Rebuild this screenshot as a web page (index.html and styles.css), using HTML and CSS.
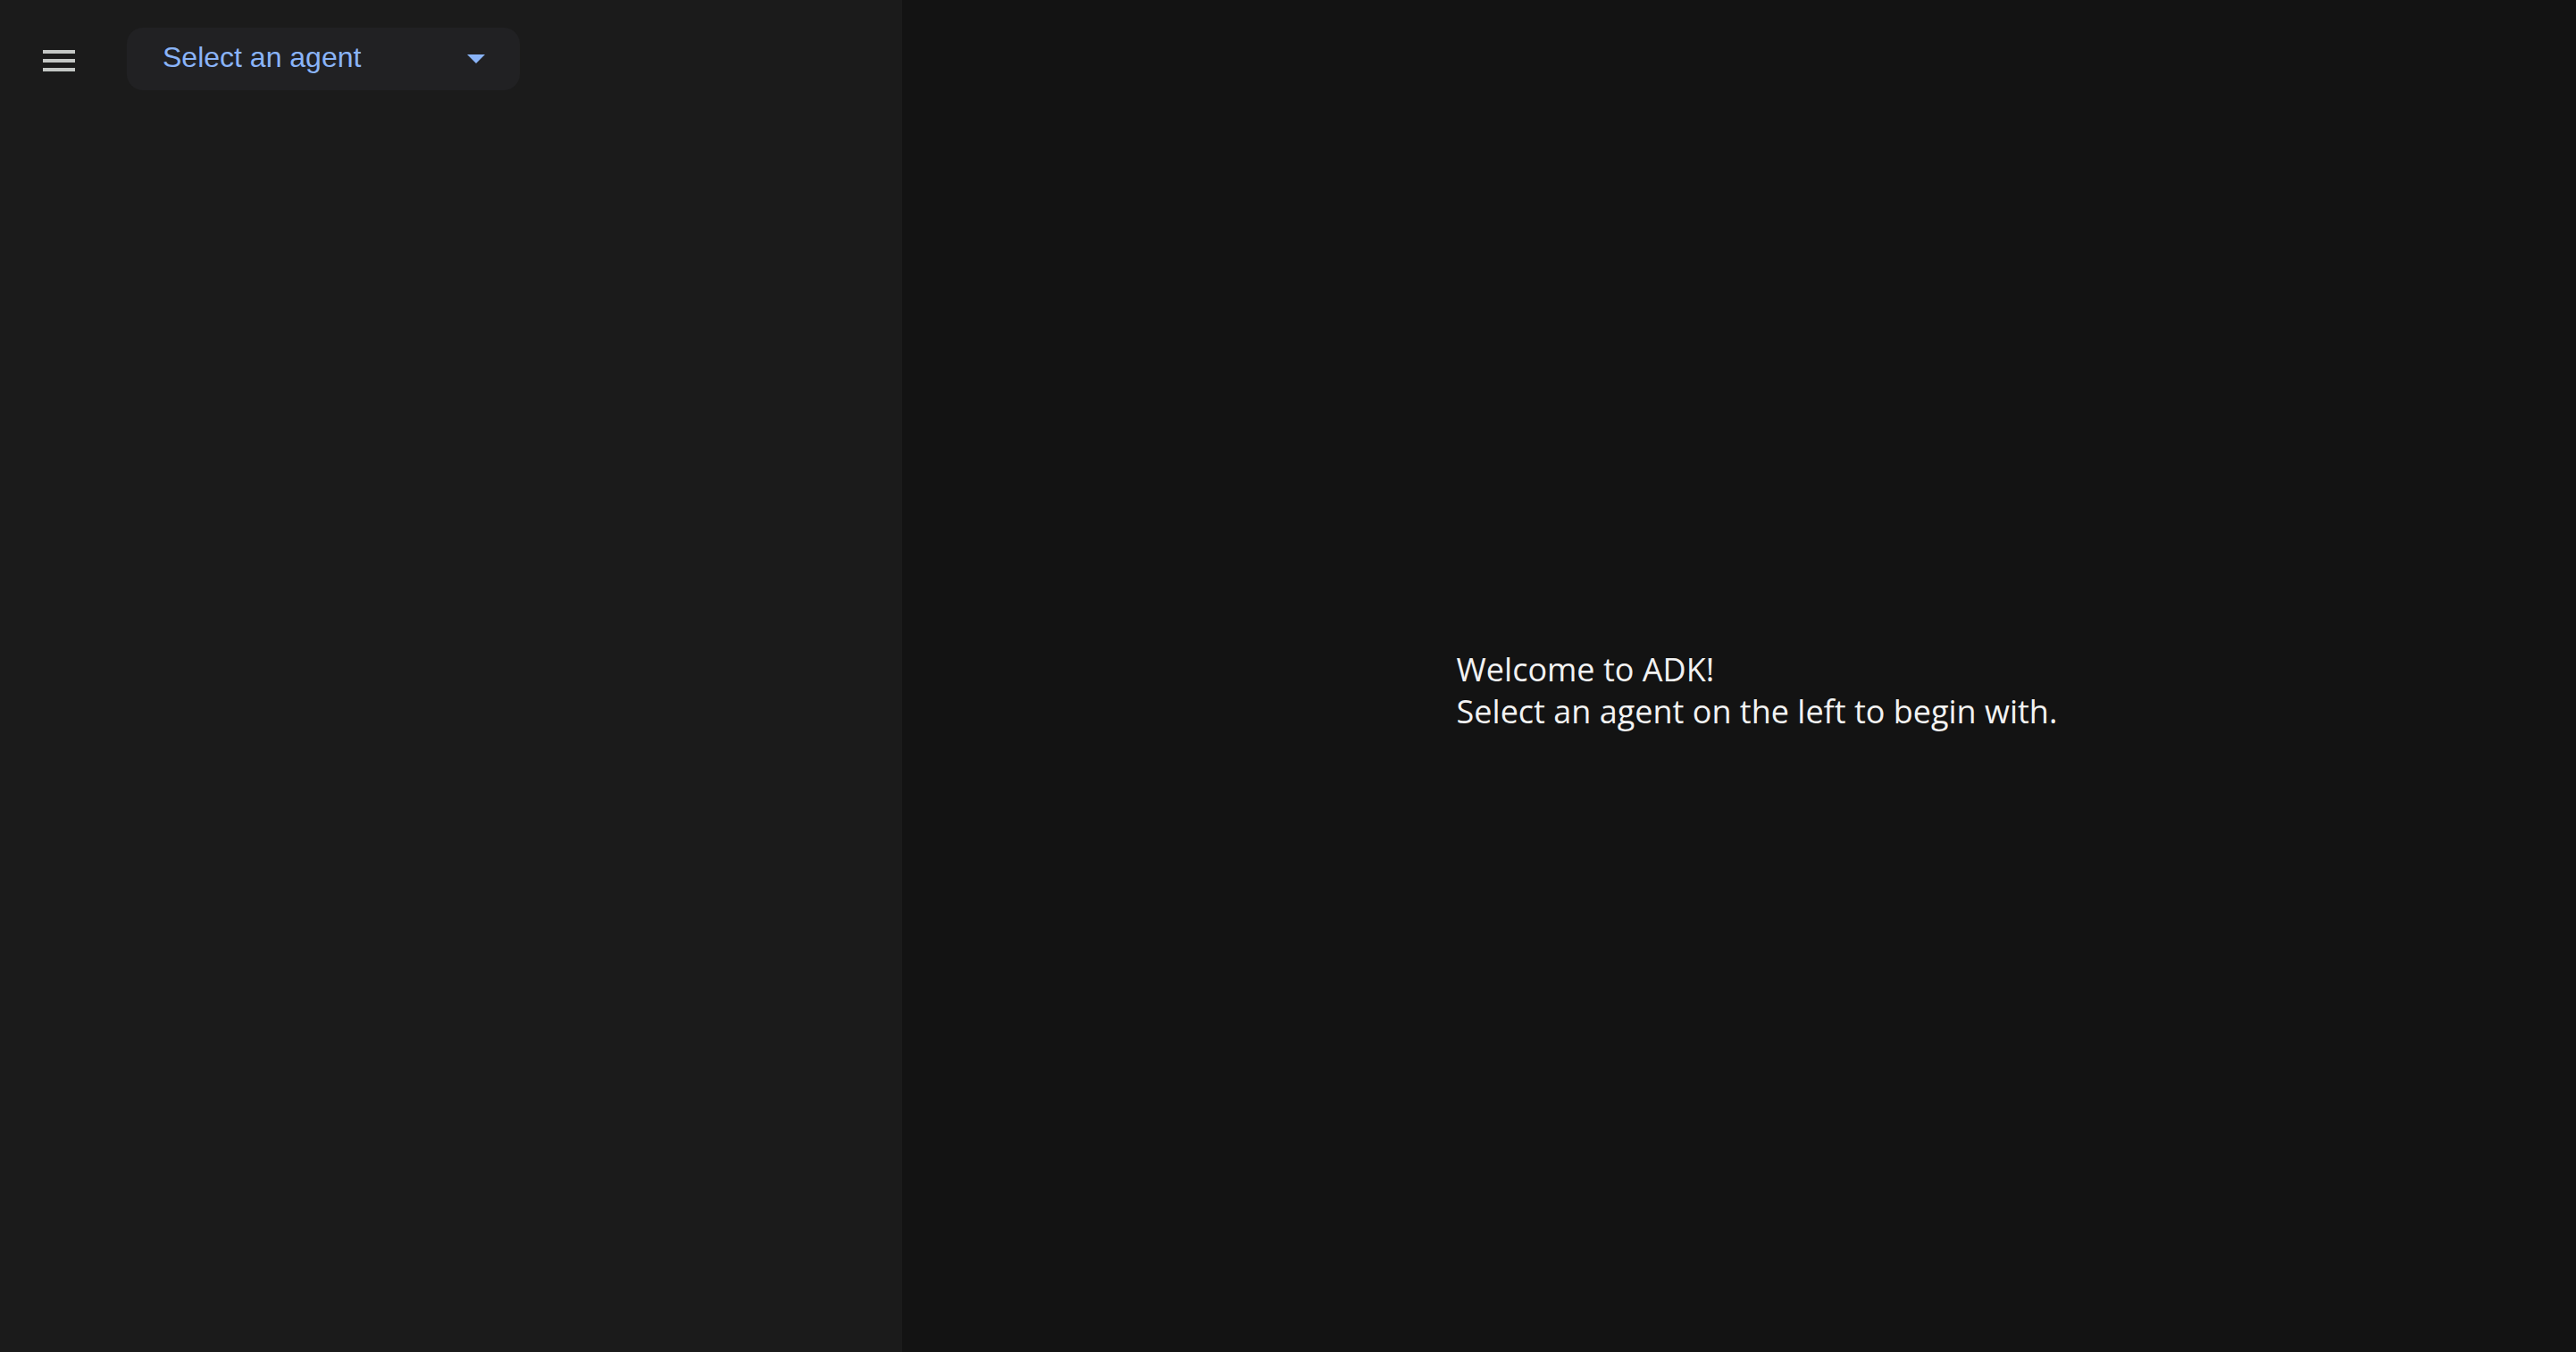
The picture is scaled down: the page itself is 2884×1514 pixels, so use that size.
FILE: index.html
```html
<!DOCTYPE html>
<html lang="en">
<head>
<meta charset="utf-8">
<title>ADK</title>
<link rel="stylesheet" href="styles.css">
</head>
<body>
<div class="app">
  <aside class="sidebar">
    <div class="toolbar">
      <button class="menu-btn" aria-label="Menu">
        <svg width="48" height="48" viewBox="0 0 24 24"><path d="M3 18h18v-2H3v2zm0-5h18v-2H3v2zm0-7v2h18V6H3z" fill="#c4c7c5"/></svg>
      </button>
      <div class="agent-select">
        <span class="agent-label">Select an agent</span>
        <svg class="arrow" width="20" height="10" viewBox="0 0 20 10"><path d="M0 0h20L10 10z" fill="#8ab4f8"/></svg>
      </div>
    </div>
  </aside>
  <main class="content">
    <div class="welcome">
      <div>Welcome to ADK!</div>
      <div>Select an agent on the left to begin with.</div>
    </div>
  </main>
</div>
</body>
</html>
```
FILE: styles.css
```css
html, body {
  margin: 0;
  padding: 0;
  height: 100%;
  background: #131313;
}
.app {
  display: flex;
  height: 100vh;
}
.sidebar {
  width: 1010px;
  flex: 0 0 1010px;
  background: #1b1b1b;
}
.toolbar {
  display: flex;
  align-items: center;
  padding: 31px 0 0 42px;
  gap: 52px;
}
.menu-btn {
  width: 48px;
  height: 48px;
  padding: 0;
  margin-top: 4px;
  border: 0;
  background: transparent;
  display: flex;
}
.agent-select {
  width: 440px;
  height: 70px;
  box-sizing: border-box;
  background: #212123;
  border-radius: 18px;
  display: flex;
  align-items: center;
  justify-content: space-between;
  padding: 0 39px 0 40px;
}
.agent-label {
  font-family: "Liberation Sans", Arial, sans-serif;
  font-size: 32px;
  color: #8ab4f8;
  position: relative;
  top: -2px;
}
.arrow {
  display: block;
}
.content {
  flex: 1;
  display: flex;
  align-items: center;
  justify-content: center;
  padding: 31px 0 0 40px;
  box-sizing: border-box;
}
.welcome {
  font-family: "Open Sans", sans-serif;
  font-size: 36px;
  line-height: 47px;
  color: #f2f2f2;
}
```
